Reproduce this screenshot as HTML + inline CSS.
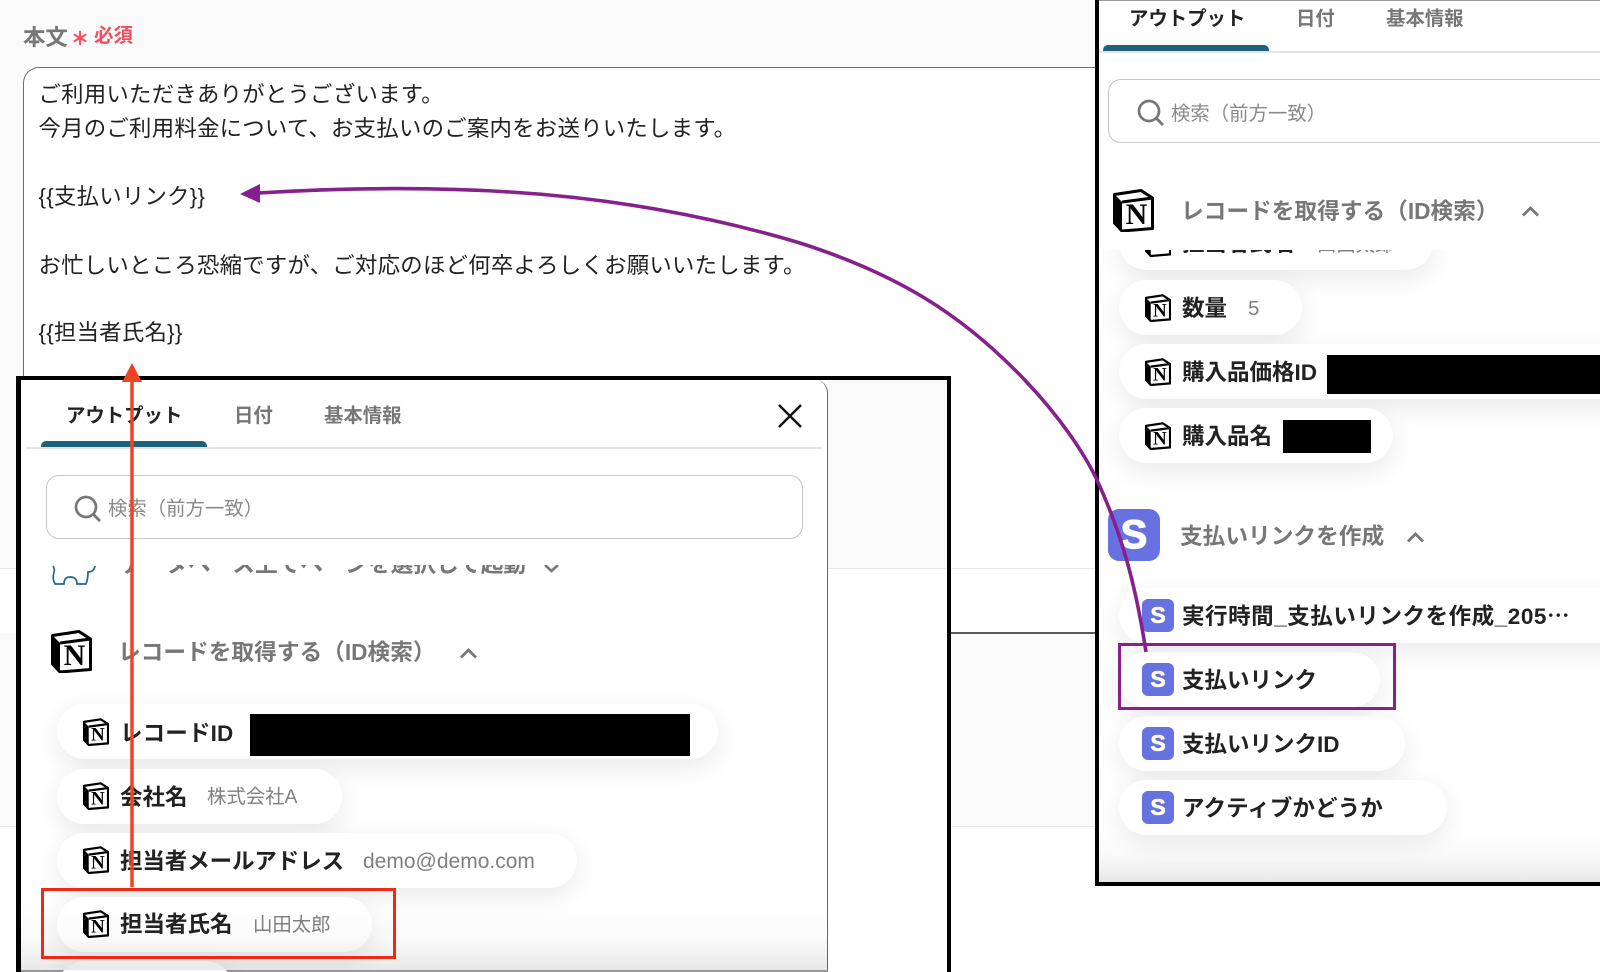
<!DOCTYPE html>
<html lang="ja"><head><meta charset="utf-8"><title>本文</title>
<style>
html,body{margin:0;padding:0;background:#fff;width:1600px;height:972px;overflow:hidden}
#w{position:absolute;left:0;top:0;width:1600px;height:972px;overflow:hidden;font-family:"Liberation Sans","Noto Sans CJK JP",sans-serif;color:#222}
.a{position:absolute}
.t{position:absolute;white-space:nowrap;line-height:30px;height:30px}
.b{font-weight:700}
.body{font-size:22.4px;letter-spacing:.25px;color:#222;left:38.5px}
.tab{font-size:19.4px;font-weight:700;color:#777}
.h{font-size:22.7px;font-weight:700;color:#777}
.l{font-size:22.5px;font-weight:700;color:#222}
.v{font-size:19.4px;color:#808080}
.pill{position:absolute;height:55px;border-radius:28px;background:#fff;box-shadow:0 8px 26px rgba(0,0,0,.09)}
.n{position:absolute;width:26px;height:28px}
.s{position:absolute;width:32px;height:33px;border-radius:6px;background:#6772e0;color:#fff;font:700 23px/33px "Liberation Sans",sans-serif;text-align:center;-webkit-text-stroke:.6px #fff}
.blk{position:absolute;background:#000}
svg text{font-family:"Liberation Serif",serif;font-weight:700}
</style></head>
<body>
<div id="w">
<!-- page backgrounds -->
<div class="a" style="left:0;top:0;width:1600px;height:568px;background:#fafafa"></div>
<div class="a" style="left:0;top:568px;width:1600px;height:1px;background:#e8e8e8"></div>
<div class="a" style="left:0;top:569px;width:1600px;height:64px;background:#fff"></div>
<div class="a" style="left:0;top:633px;width:1600px;height:193px;background:#fafafa"></div>
<div class="a" style="left:0;top:826px;width:1600px;height:1px;background:#e6e6e6"></div>
<div class="a" style="left:0;top:827px;width:1600px;height:145px;background:#fff"></div>
<!-- textarea -->
<div class="a" style="left:23px;top:67px;width:1200px;height:501px;box-sizing:border-box;border:1.5px solid #6e6e6e;border-radius:16px 0 0 16px;border-right:0;border-bottom:0;background:#fff"></div>
<div class="a" style="left:951px;top:632px;width:145px;height:1.5px;background:#5a5a5a"></div>
<div class="t b" style="left:23px;top:23px;font-size:22.4px;color:#777">本文</div>
<div class="t b" style="left:71px;top:24px;font-size:18px;color:#f2515f;-webkit-text-stroke:.5px #f2515f">＊</div>
<div class="t b" style="left:94px;top:21px;font-size:19.5px;color:#f0505e">必須</div>
<div class="t body" style="top:80px">ご利用いただきありがとうございます。</div>
<div class="t body" style="top:114px">今月のご利用料金について、お支払いのご案内をお送りいたします。</div>
<div class="t body" style="top:182px">{{支払いリンク}}</div>
<div class="t body" style="top:251px">お忙しいところ恐縮ですが、ご対応のほど何卒よろしくお願いいたします。</div>
<div class="t body" style="top:318px">{{担当者氏名}}</div>

<!-- LEFT FRAME -->
<div class="a" style="left:16px;top:376px;width:935px;height:596px;background:#000"></div>
<div class="a" style="left:21px;top:380px;width:926px;height:592px;background:#fff;overflow:hidden">
  <div class="a" style="left:807px;top:0;width:119px;height:188px;background:#fafafa"></div>
  <div class="a" style="left:807px;top:188px;width:119px;height:1px;background:#e8e8e8"></div>
  <div class="a" style="left:0;top:-1px;width:807px;height:592px;box-sizing:border-box;border-right:1.5px solid #666;border-top-right-radius:14px;background:#fff"></div>
  <div class="a" style="left:0;top:590px;width:807px;height:1.5px;background:#999"></div>
</div>
<div class="t tab" style="left:66px;top:401px;color:#222">アウトプット</div>
<div class="t tab" style="left:234px;top:401px">日付</div>
<div class="t tab" style="left:324px;top:401px">基本情報</div>
<div class="a" style="left:26px;top:447px;width:796px;height:1.5px;background:#e4e4e4"></div>
<div class="a" style="left:41px;top:441px;width:166px;height:6px;border-radius:5px 5px 0 0;background:#1f607c"></div>
<svg class="a" style="left:778px;top:404px" width="24" height="24" viewBox="0 0 24 24"><path d="M1 1 23 23M23 1 1 23" stroke="#111" stroke-width="2.4" fill="none"/></svg>
<div class="a" style="left:46px;top:475px;width:757px;height:64px;box-sizing:border-box;border:1.5px solid #c6c6c6;border-radius:13px;background:#fff"></div>
<svg class="a" style="left:73px;top:494px" width="28" height="28" viewBox="0 0 28 28"><circle cx="13" cy="13" r="10" fill="none" stroke="#777" stroke-width="2.7"/><path d="M20.500 20.500 27 27" stroke="#777" stroke-width="2.900" fill="none"/></svg>
<div class="t" style="left:108px;top:494px;font-size:19.4px;color:#8a8a8a">検索（前方一致）</div>
<div class="a" style="left:21px;top:565px;width:800px;height:30px;overflow:hidden">
  <div class="t h" style="left:99px;top:-16px">データベース上でページを選択して起動</div>
</div>
<svg class="a" style="left:50px;top:565px" width="48" height="24" viewBox="0 0 48 24"><path d="M3 1Q5 4 4 7 2 14 5 19L14 19Q14 12 20 12 27 12 27 19L36 19Q38 14 38 7 44 7 45 1" fill="none" stroke="#1f6a88" stroke-width="1.7"/></svg>
<svg class="a" style="left:543px;top:565px" width="17" height="9" viewBox="0 0 17 9"><path d="M2 0 8.500 6 15 0" fill="none" stroke="#777" stroke-width="2.6"/></svg>
<svg class="a" style="left:51px;top:630px" width="41" height="43" viewBox="0 0 41 43"><path d="M1.500 5.500 28 1.500 39.500 9V39.500L9 42 1.500 34Z" fill="#fff" stroke="#000" stroke-width="3" stroke-linejoin="round"/><path d="M1.500 5.500 9 13V42L1.500 34Z" fill="#000"/><path d="M9 13 39.500 9" stroke="#000" stroke-width="3"/><text x="23.500" y="35" font-size="30" text-anchor="middle">N</text></svg>
<div class="t h" style="left:118px;top:637px">レコードを取得する（ID検索）</div>
<svg class="a" style="left:459px;top:647px" width="19" height="12" viewBox="0 0 19 12"><path d="M2 10.500 9.500 3 17 10.500" fill="none" stroke="#777" stroke-width="2.800"/></svg>

<div class="pill" style="left:57px;top:704px;width:661px"></div>
<div class="pill" style="left:57px;top:769px;width:285px"></div>
<div class="pill" style="left:57px;top:833px;width:520px"></div>
<div class="pill" style="left:57px;top:897px;width:315px"></div>
<div class="pill" style="left:57px;top:961px;width:176px"></div>
<svg class="n" style="left:83px;top:718px" viewBox="0 0 41 43"><path d="M1.500 5.500 28 1.500 39.500 9V39.500L9 42 1.500 34Z" fill="#fff" stroke="#000" stroke-width="3.500" stroke-linejoin="round"/><path d="M1.500 5.500 9 13V42L1.500 34Z" fill="#000"/><path d="M9 13 39.500 9" stroke="#000" stroke-width="3.500"/><text x="23.500" y="35" font-size="30" text-anchor="middle">N</text></svg>
<svg class="n" style="left:83px;top:782px" viewBox="0 0 41 43"><path d="M1.500 5.500 28 1.500 39.500 9V39.500L9 42 1.500 34Z" fill="#fff" stroke="#000" stroke-width="3.500" stroke-linejoin="round"/><path d="M1.500 5.500 9 13V42L1.500 34Z" fill="#000"/><path d="M9 13 39.500 9" stroke="#000" stroke-width="3.500"/><text x="23.500" y="35" font-size="30" text-anchor="middle">N</text></svg>
<svg class="n" style="left:83px;top:846px" viewBox="0 0 41 43"><path d="M1.500 5.500 28 1.500 39.500 9V39.500L9 42 1.500 34Z" fill="#fff" stroke="#000" stroke-width="3.500" stroke-linejoin="round"/><path d="M1.500 5.500 9 13V42L1.500 34Z" fill="#000"/><path d="M9 13 39.500 9" stroke="#000" stroke-width="3.500"/><text x="23.500" y="35" font-size="30" text-anchor="middle">N</text></svg>
<svg class="n" style="left:83px;top:910px" viewBox="0 0 41 43"><path d="M1.500 5.500 28 1.500 39.500 9V39.500L9 42 1.500 34Z" fill="#fff" stroke="#000" stroke-width="3.500" stroke-linejoin="round"/><path d="M1.500 5.500 9 13V42L1.500 34Z" fill="#000"/><path d="M9 13 39.500 9" stroke="#000" stroke-width="3.500"/><text x="23.500" y="35" font-size="30" text-anchor="middle">N</text></svg>
<div class="t l" style="left:120px;top:719px;letter-spacing:.15px">レコードID</div>
<div class="blk" style="left:250px;top:714px;width:440px;height:42px"></div>
<div class="t l" style="left:120px;top:783px">会社名</div>
<div class="t v" style="left:207px;top:782px">株式会社A</div>
<div class="t l" style="left:120px;top:847px;letter-spacing:-.1px">担当者メールアドレス</div>
<div class="t v" style="left:363px;top:847px;font-size:21px">demo@demo.com</div>
<div class="t l" style="left:120px;top:910px">担当者氏名</div>
<div class="t v" style="left:253px;top:910px">山田太郎</div>
<div class="a" style="left:21px;top:905px;width:806px;height:65px;background:linear-gradient(to bottom,rgba(0,0,0,0),rgba(0,0,0,.02) 50%,rgba(0,0,0,.09))"></div>
<div class="a" style="left:41px;top:888px;width:355px;height:71px;box-sizing:border-box;border:3.500px solid #ee2a14"></div>

<!-- RIGHT FRAME -->
<div class="a" style="left:1095px;top:0;width:505px;height:886px;background:#000"></div>
<div class="a" style="left:1099px;top:0;width:501px;height:882px;background:#fff"></div>
<div class="a" style="left:1099px;top:0;width:501px;height:1px;background:#999"></div>
<div class="t tab" style="left:1129px;top:4px;color:#222">アウトプット</div>
<div class="t tab" style="left:1296px;top:4px">日付</div>
<div class="t tab" style="left:1386px;top:4px">基本情報</div>
<div class="a" style="left:1099px;top:51px;width:501px;height:1.500px;background:#e4e4e4"></div>
<div class="a" style="left:1103px;top:45px;width:166px;height:6px;border-radius:5px 5px 0 0;background:#1f607c"></div>
<div class="a" style="left:1108px;top:79px;width:540px;height:64px;box-sizing:border-box;border:1.500px solid #c6c6c6;border-radius:13px;background:#fff"></div>
<svg class="a" style="left:1136px;top:98px" width="28" height="28" viewBox="0 0 28 28"><circle cx="13" cy="13" r="10" fill="none" stroke="#777" stroke-width="2.700"/><path d="M20.500 20.500 27 27" stroke="#777" stroke-width="2.900" fill="none"/></svg>
<div class="t" style="left:1171px;top:98.500px;font-size:19.400px;color:#8a8a8a">検索（前方一致）</div>
<svg class="a" style="left:1113px;top:189px" width="41" height="43" viewBox="0 0 41 43"><path d="M1.500 5.500 28 1.500 39.500 9V39.500L9 42 1.500 34Z" fill="#fff" stroke="#000" stroke-width="3" stroke-linejoin="round"/><path d="M1.500 5.500 9 13V42L1.500 34Z" fill="#000"/><path d="M9 13 39.500 9" stroke="#000" stroke-width="3"/><text x="23.500" y="35" font-size="30" text-anchor="middle">N</text></svg>
<div class="t h" style="left:1181px;top:196px">レコードを取得する（ID検索）</div>
<svg class="a" style="left:1521px;top:205px" width="19" height="12" viewBox="0 0 19 12"><path d="M2 10.500 9.500 3 17 10.500" fill="none" stroke="#777" stroke-width="2.800"/></svg>

<div class="a" style="left:1099px;top:250px;width:501px;height:632px;overflow:hidden">
  <div class="pill" style="left:20px;top:-35px;width:314px"></div>
  <div class="t l" style="left:83px;top:-21px">担当者氏名</div>
  <div class="t v" style="left:218px;top:-20px">山田太郎</div>
  <svg class="n" style="left:46px;top:-21px" viewBox="0 0 41 43"><path d="M1.500 5.500 28 1.500 39.500 9V39.500L9 42 1.500 34Z" fill="#fff" stroke="#000" stroke-width="3.500" stroke-linejoin="round"/><path d="M1.500 5.500 9 13V42L1.500 34Z" fill="#000"/><path d="M9 13 39.500 9" stroke="#000" stroke-width="3.500"/></svg>
  <div class="pill" style="left:20px;top:30px;width:183px"></div>
  <div class="pill" style="left:20px;top:94px;width:540px"></div>
  <div class="pill" style="left:20px;top:158px;width:274px"></div>
  <div class="pill" style="left:20px;top:338px;width:520px"></div>
  <div class="pill" style="left:20px;top:402px;width:261px"></div>
  <div class="pill" style="left:20px;top:466px;width:286px"></div>
  <div class="pill" style="left:20px;top:530px;width:328px"></div>
</div>
<svg class="n" style="left:1145px;top:294px" viewBox="0 0 41 43"><path d="M1.500 5.500 28 1.500 39.500 9V39.500L9 42 1.500 34Z" fill="#fff" stroke="#000" stroke-width="3.500" stroke-linejoin="round"/><path d="M1.500 5.500 9 13V42L1.500 34Z" fill="#000"/><path d="M9 13 39.500 9" stroke="#000" stroke-width="3.500"/><text x="23.500" y="35" font-size="30" text-anchor="middle">N</text></svg>
<svg class="n" style="left:1145px;top:358px" viewBox="0 0 41 43"><path d="M1.500 5.500 28 1.500 39.500 9V39.500L9 42 1.500 34Z" fill="#fff" stroke="#000" stroke-width="3.500" stroke-linejoin="round"/><path d="M1.500 5.500 9 13V42L1.500 34Z" fill="#000"/><path d="M9 13 39.500 9" stroke="#000" stroke-width="3.500"/><text x="23.500" y="35" font-size="30" text-anchor="middle">N</text></svg>
<svg class="n" style="left:1145px;top:422px" viewBox="0 0 41 43"><path d="M1.500 5.500 28 1.500 39.500 9V39.500L9 42 1.500 34Z" fill="#fff" stroke="#000" stroke-width="3.500" stroke-linejoin="round"/><path d="M1.500 5.500 9 13V42L1.500 34Z" fill="#000"/><path d="M9 13 39.500 9" stroke="#000" stroke-width="3.500"/><text x="23.500" y="35" font-size="30" text-anchor="middle">N</text></svg>
<div class="t l" style="left:1182px;top:294px">数量</div>
<div class="t v" style="left:1248px;top:294px;font-size:20.500px">5</div>
<div class="t l" style="left:1182px;top:358px">購入品価格ID</div>
<div class="blk" style="left:1327px;top:355px;width:273px;height:39px"></div>
<div class="t l" style="left:1182px;top:422px">購入品名</div>
<div class="blk" style="left:1283px;top:420px;width:88px;height:33px"></div>

<div class="a" style="left:1108px;top:509px;width:52px;height:52px;border-radius:11px;background:#6772e0;color:#fff;font:700 40px/52px 'Liberation Sans',sans-serif;text-align:center;-webkit-text-stroke:1.2px #fff">S</div>
<div class="t h" style="left:1180px;top:521px">支払いリンクを作成</div>
<svg class="a" style="left:1406px;top:531px" width="19" height="12" viewBox="0 0 19 12"><path d="M2 10.500 9.500 3 17 10.500" fill="none" stroke="#777" stroke-width="2.800"/></svg>

<div class="s" style="left:1142px;top:599px">S</div>
<div class="s" style="left:1142px;top:663px">S</div>
<div class="s" style="left:1142px;top:727px">S</div>
<div class="s" style="left:1142px;top:791px">S</div>
<div class="t l" style="left:1182px;top:602px;letter-spacing:.55px">実行時間_支払いリンクを作成_205⋯</div>
<div class="t l" style="left:1182px;top:666px">支払いリンク</div>
<div class="t l" style="left:1182px;top:730px">支払いリンクID</div>
<div class="t l" style="left:1182px;top:794px;letter-spacing:.1px">アクティブかどうか</div>
<div class="a" style="left:1099px;top:832px;width:501px;height:50px;background:linear-gradient(to bottom,rgba(0,0,0,0),rgba(0,0,0,.025) 50%,rgba(0,0,0,.09))"></div>
<div class="a" style="left:1118px;top:643px;width:278px;height:67px;box-sizing:border-box;border:3px solid #85208c"></div>

<!-- Arrows -->
<svg class="a" style="left:0;top:0" width="1600" height="972" viewBox="0 0 1600 972">
  <path d="M258 193C340 188 430 187 510 192 610 198 710 216 800 243 900 275 960 315 1015 370 1060 415 1085 455 1097 480 1120 530 1135 580 1146 652" fill="none" stroke="#85208c" stroke-width="3.600"/>
  <path d="M240 194 260 184V203Z" fill="#85208c"/>
  <path d="M132 887V375" stroke="#ee4423" stroke-width="3.500" fill="none"/>
  <path d="M132 363 142 382H122Z" fill="#ee4423"/>
</svg>
</div>
</body></html>
